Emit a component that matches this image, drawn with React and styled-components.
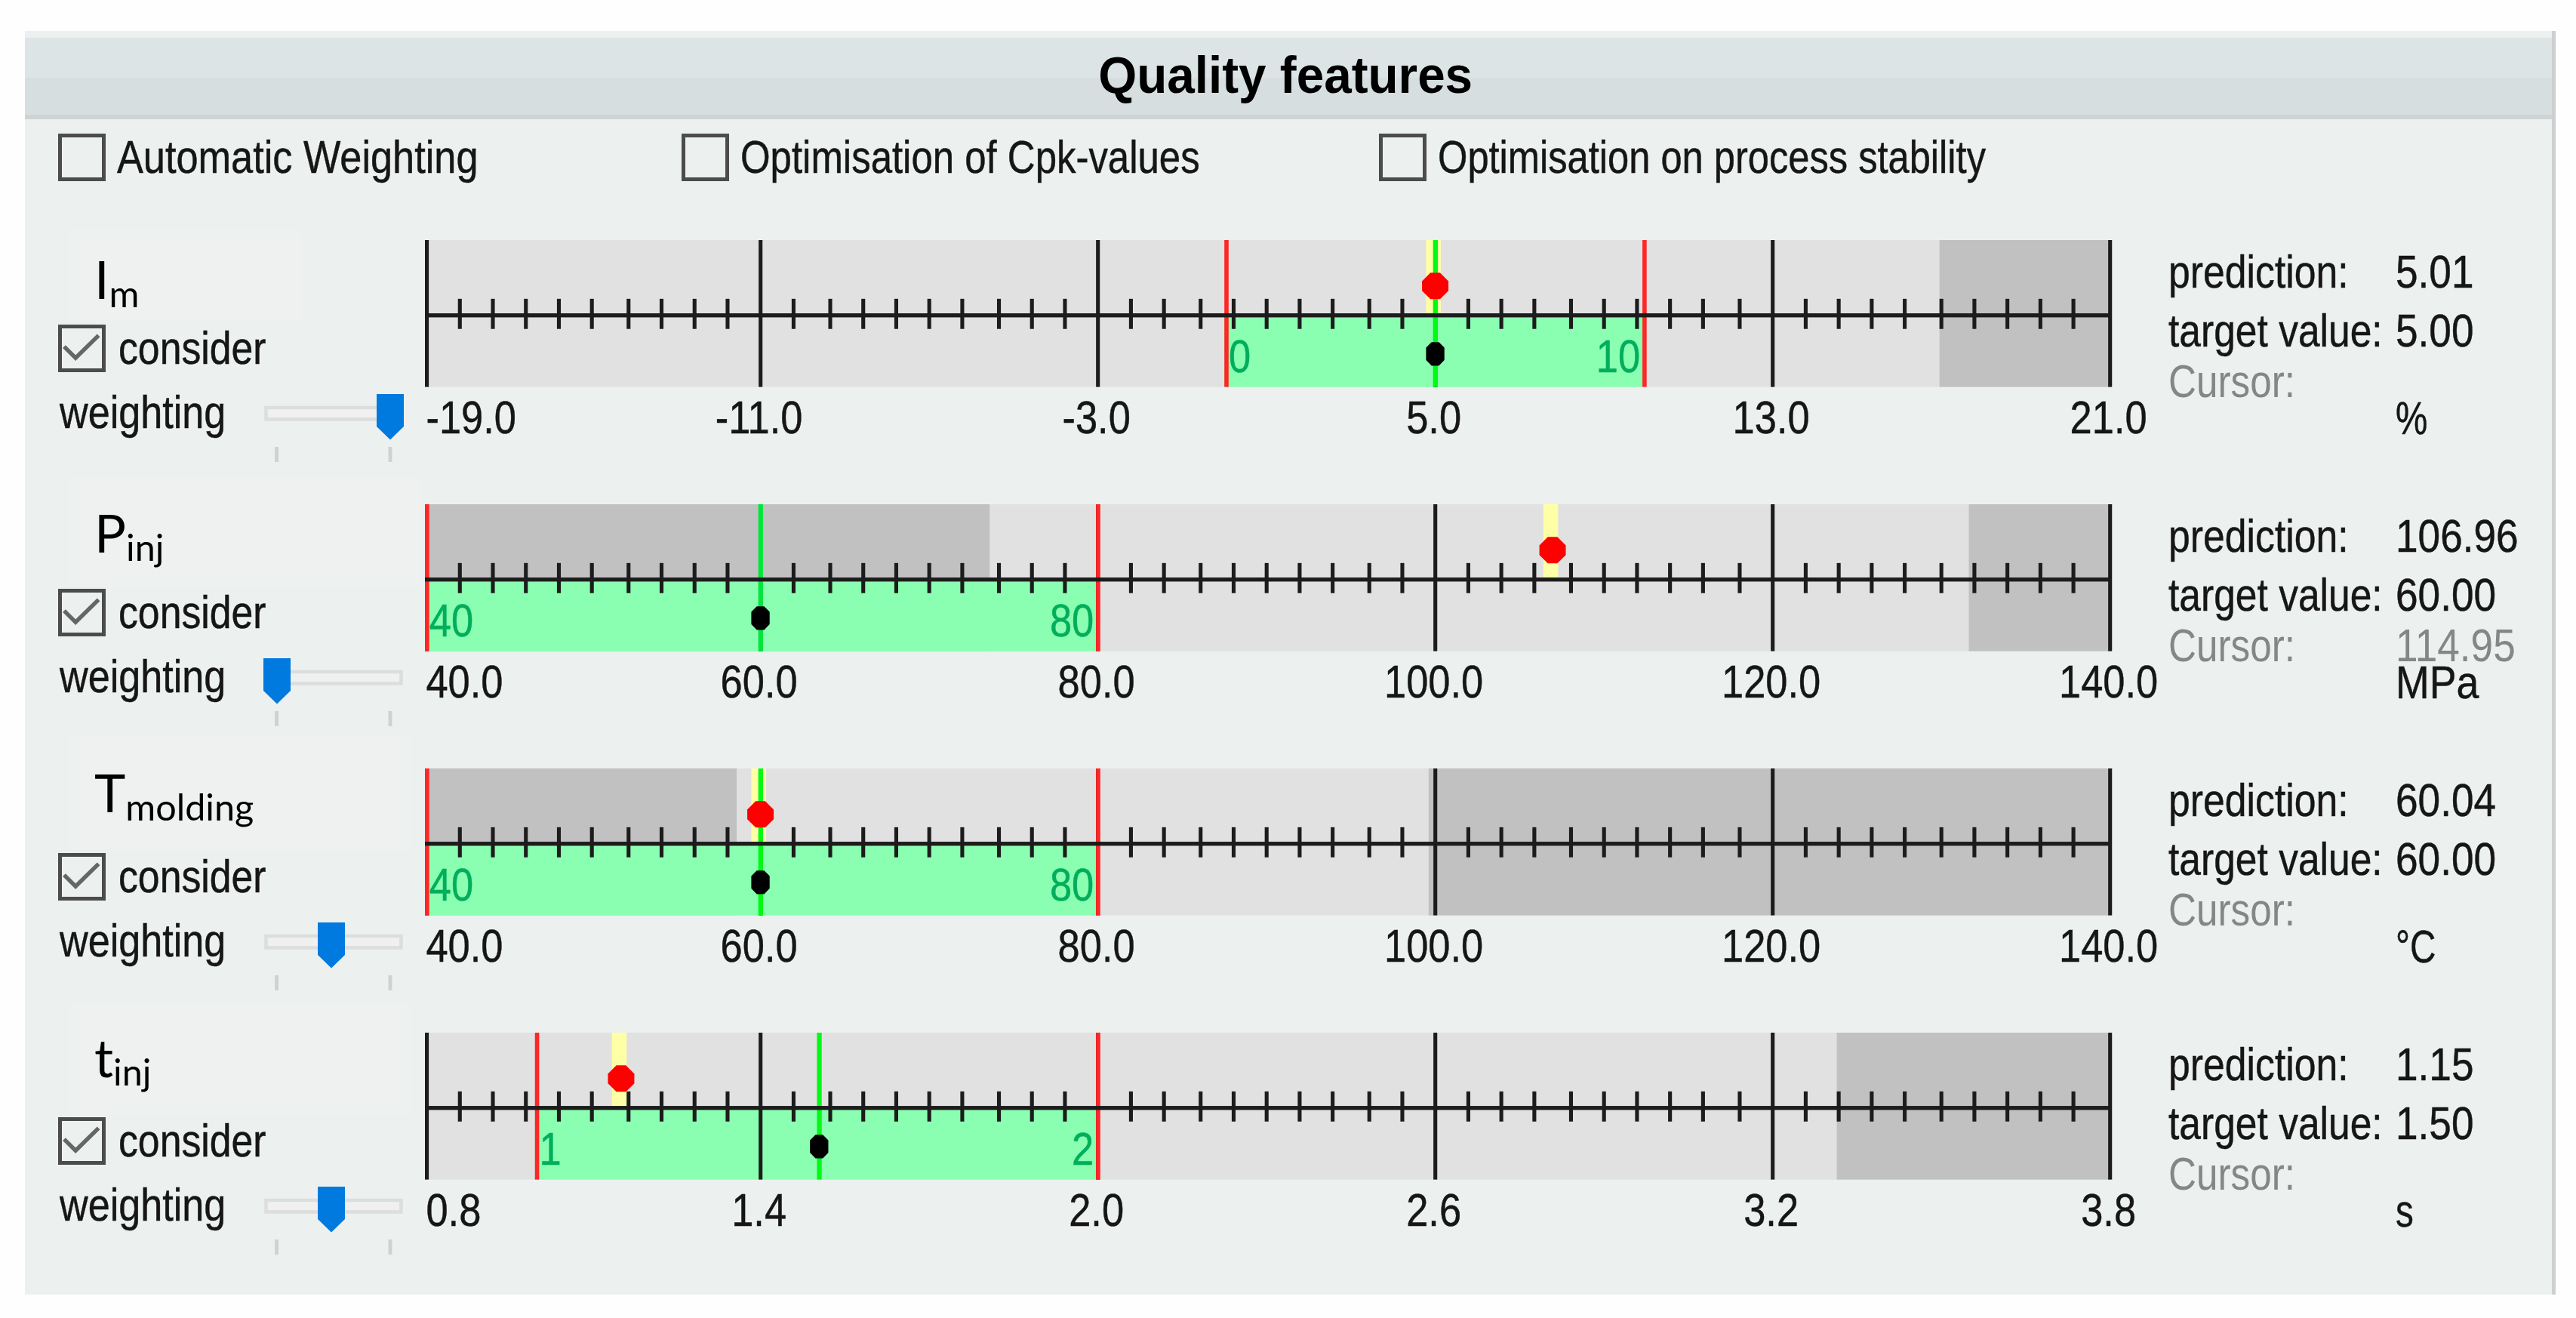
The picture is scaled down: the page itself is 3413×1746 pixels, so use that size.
import styled, { createGlobalStyle } from 'styled-components';


const features = [
  {
    name: 'I', sub: 'm', box: 308, skip: 29, baseline: 76,
    weight: 150, limits: [218, 332], limitText: ['0', '10'],
    scale: ['-19.0', '-11.0', '-3.0', '5.0', '13.0', '21.0'],
    low: 0, high: 413, band: 273, predicted: 275, target: 275,
    prediction: '5.01', targetValue: '5.00', cursor: '', unit: '%',
  },
  {
    name: 'P', sub: 'inj', box: 465, skip: 8, baseline: 62,
    weight: 0, limits: [0, 183], limitText: ['40', '80'],
    scale: ['40.0', '60.0', '80.0', '100.0', '120.0', '140.0'],
    low: 154, high: 421, band: 305, predicted: 307, target: 91,
    prediction: '106.96', targetValue: '60.00', cursor: '114.95', unit: 'MPa',
  },
  {
    name: 'T', sub: 'molding', box: 450, skip: 0, baseline: 56,
    weight: 72, limits: [0, 183], limitText: ['40', '80'],
    scale: ['40.0', '60.0', '80.0', '100.0', '120.0', '140.0'],
    low: 85, high: 273.7, band: 89, predicted: 91, target: 91,
    prediction: '60.04', targetValue: '60.00', cursor: '', unit: '°C',
  },
  {
    name: 't', sub: 'inj', box: 450, skip: 2, baseline: 57,
    weight: 72, limits: [30, 183], limitText: ['1', '2'],
    scale: ['0.8', '1.4', '2.0', '2.6', '3.2', '3.8'],
    low: 0, high: 385, band: 51, predicted: 53, target: 107,
    prediction: '1.15', targetValue: '1.50', cursor: '', unit: 's',
  },
];

// 50 divisions over 459 steps, snapped to whole steps
const tick = (i) => Math.floor((i * 459) / 50);


export default function App() {
  return (
    <>
      <GlobalStyle />
      <Panel>
        <Header>
          <Title>Quality features</Title>
        </Header>

        <Options>
          <Option $width={826}>
            <CheckBox />
            <Label $k={0.857}>Automatic Weighting</Label>
          </Option>
          <Option $width={924}>
            <CheckBox />
            <Label $k={0.835}>Optimisation of Cpk-values</Label>
          </Option>
          <Option>
            <CheckBox />
            <Label $k={0.83}>Optimisation on process stability</Label>
          </Option>
        </Options>

        {features.map((feature) => (
          <Feature key={feature.name} {...feature} />
        ))}
      </Panel>
    </>
  );
}


function Feature(props) {
  return (
    <Row>
      <Settings>
        <SymbolBox $width={props.box} $skip={props.skip} $baseline={props.baseline}>
          {props.name}<sub>{props.sub}</sub>
        </SymbolBox>
        <Consider>
          <CheckBox checked />
          <Label $k={0.848}>consider</Label>
        </Consider>
        <Weighting>
          <Label>weighting</Label>
          <Slider weight={props.weight} />
        </Weighting>
      </Settings>

      <Chart {...props} />

      <Values>
        <Label $k={0.848}>prediction:</Label>
        <Label $k={0.872}>{props.prediction}</Label>
        <Label $k={0.845}>target value:</Label>
        <Label $k={0.872}>{props.targetValue}</Label>
        <Label $muted $k={0.84}>Cursor:</Label>
        <Label $muted $k={0.872}>{props.cursor}</Label>
        <span />
        <Label $k={props.unit === 'MPa' ? 0.88 : 0.78}>{props.unit}</Label>
      </Values>
    </Row>
  );
}


function CheckBox({ checked }) {
  return (
    <Box>
      {checked && (
        <svg viewBox="0 0 54 54" width="54" height="54" fill="none" stroke="#666666" strokeWidth="5.500">
          <path d="M3 25 L18.500 40.500 L49.500 10" />
        </svg>
      )}
    </Box>
  );
}


function Slider({ weight }) {
  return (
    <svg viewBox="0 0 186 90" width="186" height="90">
      <rect x="3.500" y="18" width="179" height="15.500" fill="#f0f0f0" stroke="#dcdddd" strokeWidth="4.500" />
      <path d="M17.500 70 V90 M168 70 V90" stroke="#d0d1d1" strokeWidth="4.800" />
      <path transform={`translate(${weight} 0)`} d="M0 0 H36 V43 L18 60.500 L0 43 Z" fill="#007adf" />
    </svg>
  );
}


function Chart({ limits, limitText, scale, low, high, band, predicted, target }) {
  const ticks = Array.from({ length: 51 }, (_, i) => i);

  return (
    <Ruler viewBox="0 0 460 55" preserveAspectRatio="none">
      <rect width="459.500" height="40" fill="#e1e1e1" />
      <rect width={low} height="40" fill="#c1c1c1" />
      <rect x={high} width={459.5 - high} height="40" fill="#c1c1c1" />
      <rect x={limits[0]} y="20.500" width={limits[1] - limits[0]} height="19.500" fill="#8bffb1" />
      <rect x={band} width="4" height="20" fill="#ffffa6" />

      {ticks.map((i) => (
        i % 10 === 0
          ? <rect key={i} x={tick(i)} width="1.050" height="40" fill="#1c1c1c" />
          : <rect key={i} x={tick(i)} y="16" width="1.050" height="8.200" fill="#1c1c1c" />
      ))}

      {limits.map((x) => <rect key={x} x={x} width="1.150" height="40" fill="#ff2626" />)}
      <rect x={target - 0.1} width="1.300" height="40" fill={target < low ? '#00e63c' : '#00fa14'} />
      <rect y="19.950" width="460" height="1.100" fill="#1c1c1c" />

      <path
        transform={`translate(${predicted + 0.5} 12.500)`}
        d="M-1.300 -3.600 H1.300 L3.600 -1.300 V1.300 L1.300 3.600 H-1.300 L-3.600 1.300 V-1.300 Z"
        fill="#ff0000"
      />
      <path
        transform={`translate(${target + 0.5} 31)`}
        d="M-1 -3.200 H1 L2.500 -1.700 V1.700 L1 3.200 H-1 L-2.500 1.700 V-1.700 Z"
        fill="#000000"
      />

      <LimitText transform={`translate(${limits[0] + 1.2} 35.900) scale(0.860 1)`}>{limitText[0]}</LimitText>
      <LimitText transform={`translate(${limits[1] - 0.600} 35.900) scale(0.860 1)`} textAnchor="end">{limitText[1]}</LimitText>

      {scale.map((text, i) => (
        <ScaleText
          key={text}
          transform={`translate(${i === 0 ? 0.3 : tick(i * 10) + 0.1} 52.700) scale(0.860 1)`}
          textAnchor={i === 0 ? 'start' : 'middle'}
        >
          {text}
        </ScaleText>
      ))}
    </Ruler>
  );
}


const GlobalStyle = createGlobalStyle`
  * {
    box-sizing: border-box;
  }

  body {
    margin: 0;
    background-color: #FEFEFE;
    font-family: 'Liberation Sans', Arial, sans-serif;
    color: #161616;
  }
`;

const Panel = styled.div`
  width: 3353px;
  height: 1674px;
  margin: 41px 0 0 33px;
  padding-top: 9px;
  background-color: #ECF0EF;
  border-right: 5px solid #CDD0D0;
`;

const Header = styled.div`
  height: 108px;
  display: flex;
  justify-content: center;
  background: linear-gradient(#DCE4E6 0 53px, #D6DEE0 53px);
  border-bottom: 6px solid #CCD4D5;
`;

const Title = styled.h1`
  margin: 0;
  padding: 11px 9px 0 0;
  font-size: 68px;
  font-weight: 700;
  line-height: 76px;
  color: #000000;
  transform: scaleX(0.965);
`;

const Options = styled.div`
  height: 116.500px;
  padding: 18.500px 0 0 43.500px;
  display: flex;
  align-items: flex-start;
`;

const Option = styled.label`
  width: ${(props) => (props.$width ? `${props.$width}px` : 'auto')};
  display: flex;
  align-items: center;
  gap: 15px;
`;

const Box = styled.span`
  flex: none;
  width: 63px;
  height: 63px;
  display: flex;
  justify-content: center;
  align-items: center;
  border: 5px solid #4C4C4C;
`;

const Label = styled.span`
  height: 60px;
  font-size: 61px;
  line-height: 61px;
  white-space: nowrap;
  color: ${(props) => (props.$muted ? '#858686' : '#161616')};
  -webkit-text-stroke: ${(props) => (props.$muted ? 0 : 0.5)}px;
  transform: scaleX(${(props) => props.$k || 0.855});
  transform-origin: left;
`;

const Row = styled.section`
  height: 350.100px;
  display: grid;
  grid-template-columns: 530px 2235px 1fr;
  align-items: start;
`;

const Settings = styled.div`
  display: flex;
  flex-direction: column;
`;

const SymbolBox = styled.div`
  width: ${(props) => props.$width}px;
  height: ${(props) => 151 - props.$skip}px;
  margin: ${(props) => props.$skip}px 0 0 60px;
  padding: ${(props) => props.$baseline - props.$skip - 20}px 0 0 32px;
  background-color: #EFF0F0;
  font-family: Lato, 'Open Sans', sans-serif;
  font-size: 70px;
  line-height: 76px;
  color: #000000;

  sub {
    font-size: 48.500px;
    line-height: 0;
    vertical-align: -11px;
  }
`;

const Consider = styled.div`
  height: 63px;
  margin: 4px 0 0 43.500px;
  display: flex;
  align-items: center;
  gap: 17px;
`;

const Weighting = styled.div`
  margin: 23px 0 0 46px;
  display: flex;
  align-items: flex-start;

  svg {
    margin-top: 6px;
  }

  span {
    width: 269.500px;
  }
`;

const Ruler = styled.svg`
  width: 2235px;
  height: 267.600px;
  margin-top: 43px;
  overflow: visible;
`;

const ScaleText = styled.text`
  font-size: 12.550px;
  fill: #161616;
  stroke: #161616;
  stroke-width: 0.100px;
`;

const LimitText = styled(ScaleText)`
  fill: #00AE5C;
  stroke: #00AE5C;
`;

const Values = styled.div`
  padding: 55.500px 0 0 75px;
  display: grid;
  grid-template-columns: 301px 1fr;
  grid-template-rows: 77.500px 67.500px 48.500px 60px;
`;
